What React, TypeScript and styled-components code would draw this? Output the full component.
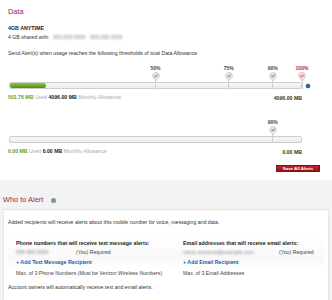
import React from "react";
import styled, { createGlobalStyle } from "styled-components";

const Global = createGlobalStyle`
  html, body { margin: 0; padding: 0; background: #ffffff; }
  body { font-family: "Liberation Sans", Arial, sans-serif; color: #333; }
  * { box-sizing: border-box; }
`;

const Page = styled.div`
  width: 332px;
  height: 300px;
  overflow: hidden;
  display: flex;
  flex-direction: column;
`;

const DataSection = styled.section`
  background: #fff;
  padding: 6px 0 0 8px;
  height: 180px;
  display: flex;
  flex-direction: column;
`;

const Title = styled.h2`
  margin: 0;
  font-weight: normal;
  font-size: 7.4px;
  line-height: 12px;
  color: #a0283c;
  display: flex;
  align-items: center;
  gap: 8px;
`;

const Plan = styled.div`
  margin-top: 7px;
  font-size: 5.3px;
  line-height: 6px;
  font-weight: bold;
  color: #222;
`;

const Line = styled.div<{ $mt?: number }>`
  margin-top: ${(p) => p.$mt ?? 3}px;
  font-size: 5.2px;
  line-height: 6px;
  color: #333;
  white-space: nowrap;
`;

const Blur = styled.span<{ $w: number }>`
  display: inline-block;
  width: ${(p) => p.$w}px;
  margin-left: 4px;
  color: #888;
  filter: blur(0.9px);
  white-space: nowrap;
  overflow: hidden;
  vertical-align: top;
`;

const Meter = styled.div<{ $mt: number }>`
  position: relative;
  margin-top: ${(p) => p.$mt}px;
  margin-left: 1px;
  width: 293px;
  padding-top: 17px;
`;

const Bar = styled.div`
  height: 7px;
  border: 1px solid #cdcdcd;
  border-radius: 2px;
  background: linear-gradient(#f7f7f7, #ececec);
  overflow: hidden;
`;

const Fill = styled.div`
  height: 100%;
  background: linear-gradient(#8cc63f, #4d8f12);
  border-radius: 2px;
`;

const Marker = styled.div`
  position: absolute;
  top: 0;
  width: 20px;
  margin-left: -10px;
  display: flex;
  flex-direction: column;
  align-items: center;
`;

const MarkLabel = styled.span<{ $red?: boolean }>`
  font-size: 5px;
  line-height: 6px;
  font-weight: bold;
  color: ${(p) => (p.$red ? "#b3213a" : "#444")};
`;

const Tick = styled.div`
  width: 1px;
  height: 9px;
  background: #cfcfcf;
  margin-top: -1px;
`;

const Help = styled.span`
  position: absolute;
  right: -8px;
  top: 19px;
  width: 4px;
  height: 4px;
  border-radius: 50%;
  background: #3d6da5;
  box-shadow: inset 0 0 0 1px #2b5a90, 0 0 0 0.5px #a9c1dd;
`;

const Stats = styled.div`
  display: flex;
  justify-content: space-between;
  align-items: baseline;
  margin-top: 5px;
  width: 294px;
  font-size: 5.2px;
  line-height: 6px;
  white-space: nowrap;
`;

const Green = styled.b`
  color: #6a9b22;
`;
const Dark = styled.b`
  color: #222;
`;
const Muted = styled.span`
  color: #aaa;
`;

const Total = styled.b`
  color: #333;
  font-weight: bold;
  position: relative;
  top: 1px;
`;

const Actions = styled.div`
  display: flex;
  justify-content: flex-end;
  padding-right: 12px;
  margin-top: 11px;
`;

const SaveButton = styled.button`
  width: 44px;
  height: 7px;
  padding: 0;
  border: 0.5px solid #7d0f16;
  background: linear-gradient(#c0262e, #9a1118);
  color: #fff;
  font-family: inherit;
  font-size: 4.4px;
  line-height: 6px;
  font-weight: bold;
`;

const WhoSection = styled.section`
  flex: 1;
  background: #f3f3f3;
  padding: 14px 3px 0 3px;
  display: flex;
  flex-direction: column;
`;

const Info = styled.span`
  display: inline-block;
  width: 5px;
  height: 5px;
  border-radius: 50%;
  background: #6f8c99;
  box-shadow: inset 0 0 0 1.2px #8da7b3;
`;

const Card = styled.div`
  margin-top: 3px;
  flex: 1;
  background: #fff;
  border: 1px solid #e6e6e6;
  border-bottom: none;
  padding: 9px 4px 0 4px;
`;

const Columns = styled.div`
  display: grid;
  grid-template-columns: 167px 1fr;
  margin-top: 12px;
`;

const Column = styled.div`
  display: flex;
  flex-direction: column;
`;

const Recipients = styled.div`
  background: linear-gradient(#ffffff, #f8f8f8 70%, #ffffff);
  padding: 3px 0 3px 8px;
  display: flex;
  flex-direction: column;
`;

const ColHead = styled.div`
  font-size: 5.3px;
  line-height: 6px;
  font-weight: bold;
  color: #222;
`;

const RecipientRow = styled.div<{ $w: number }>`
  display: grid;
  grid-template-columns: ${(p) => p.$w}px auto;
  margin-top: 3px;
  font-size: 5.2px;
  line-height: 6px;
  color: #444;
  white-space: nowrap;
`;

const AddLink = styled.a`
  margin-top: 4px;
  font-size: 5.3px;
  line-height: 6px;
  font-weight: bold;
  color: #1e5aa5;
  text-decoration: none;
`;

const Note = styled.div`
  margin: 2px 0 0 8px;
  font-size: 5.2px;
  line-height: 6px;
  color: #444;
  white-space: nowrap;
`;

type Mark = { pct: number; red?: boolean };

function Usage({
  mt,
  used,
  total,
  marks,
  help,
}: {
  mt: number;
  used: number;
  total: number;
  marks: Mark[];
  help?: boolean;
}) {
  const frac = total > 0 ? used / total : 0;
  return (
    <>
      <Meter $mt={mt}>
        <Bar>
          <Fill style={{ width: `${frac * 100}%` }} />
        </Bar>
        {marks.map((m) => (
          <Marker key={m.pct} style={{ left: `${m.pct}%` }}>
            <MarkLabel $red={m.red}>{m.pct}%</MarkLabel>
            <svg width="8" height="9" viewBox="0 0 8 9" style={{ marginTop: 1 }}>
              <path
                d="M4 9 L1.4 6.2 A3.6 3.6 0 1 1 6.6 6.2 Z"
                fill={m.red ? "#ead8dc" : "#e2e2e2"}
                stroke={m.red ? "#d7b3bb" : "#cfcfcf"}
                strokeWidth="0.5"
              />
              <path
                d="M2.4 3.8 L3.6 5 L5.8 2.6"
                fill="none"
                stroke={m.red ? "#a3213a" : "#555"}
                strokeWidth="0.8"
              />
            </svg>
            <Tick />
          </Marker>
        ))}
        {help && <Help />}
      </Meter>
      <Stats>
        <span>
          <Green>{used.toFixed(2)} MB</Green> <Muted>Used</Muted>
          {"  "}
          <Dark>{total.toFixed(2)} MB</Dark> <Muted>Monthly Allowance</Muted>
        </span>
        <Total>{total.toFixed(2)} MB</Total>
      </Stats>
    </>
  );
}

export default function App() {
  return (
    <Page>
      <Global />
      <DataSection>
        <Title>Data</Title>
        <Plan>4GB ANYTIME</Plan>
        <Line $mt={3}>
          4 GB shared with:
          <Blur $w={75}>555-555-5555 · 555-555-5555</Blur>
        </Line>
        <Line $mt={10}>
          Send Alert(s) when usage reaches the following thresholds of total Data Allowance
        </Line>
        <Usage
          mt={9}
          used={501.76}
          total={4096}
          help
          marks={[{ pct: 50 }, { pct: 75 }, { pct: 90 }, { pct: 100, red: true }]}
        />
        <Usage mt={19} used={0} total={0} marks={[{ pct: 90 }]} />
        <Actions>
          <SaveButton>Save All Alerts</SaveButton>
        </Actions>
      </DataSection>
      <WhoSection>
        <Title>
          Who to Alert <Info />
        </Title>
        <Card>
          <Line $mt={0}>
            Added recipients will receive alerts about this mobile number for voice, messaging and data.
          </Line>
          <Columns>
            <Column>
              <Recipients>
                <ColHead>Phone numbers that will receive text message alerts:</ColHead>
                <RecipientRow $w={60}>
                  <Blur $w={36} style={{ marginLeft: 0 }}>555-555-5555</Blur>
                  <span>(You) Required</span>
                </RecipientRow>
                <AddLink href="#">+ Add Text Message Recipient</AddLink>
              </Recipients>
              <Note>Max. of 3 Phone Numbers (Must be Verizon Wireless Numbers)</Note>
            </Column>
            <Column>
              <Recipients>
                <ColHead>Email addresses that will receive email alerts:</ColHead>
                <RecipientRow $w={96}>
                  <Blur $w={75} style={{ marginLeft: 0 }}>name.surname@example.com</Blur>
                  <span>(You) Required</span>
                </RecipientRow>
                <AddLink href="#">+ Add Email Recipient</AddLink>
              </Recipients>
              <Note>Max. of 3 Email Addresses</Note>
            </Column>
          </Columns>
          <Line $mt={8}>Account owners will automatically receive text and email alerts.</Line>
        </Card>
      </WhoSection>
    </Page>
  );
}
